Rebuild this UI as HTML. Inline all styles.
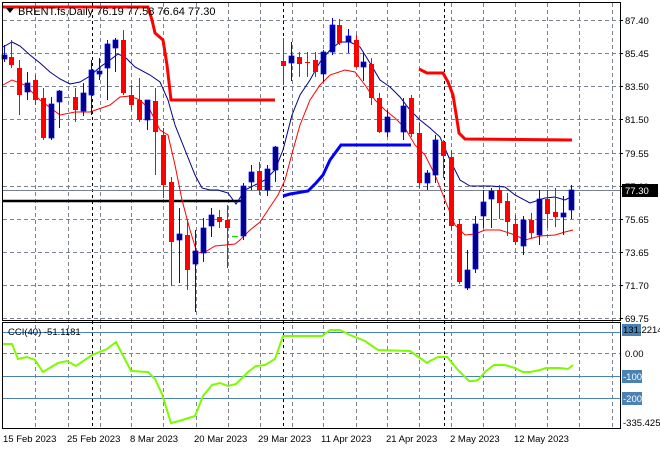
<!DOCTYPE html><html><head><style>
body{margin:0;background:#fff;width:660px;height:450px;overflow:hidden;font-family:"Liberation Sans",sans-serif}
text{font-family:"Liberation Sans",sans-serif;font-size:11px}
.sm{font-size:9.5px}
.ax{font-size:9.5px}
</style></head><body>
<svg id="s" width="660" height="450" xmlns="http://www.w3.org/2000/svg">
<rect width="660" height="450" fill="#fff"/>
<g id="grid" stroke="#7a8290" stroke-dasharray="4,3" stroke-width="1"></g>
<g stroke="#000" stroke-dasharray="3,3" stroke-width="1">
<line x1="92.5" y1="3" x2="92.5" y2="428"/><line x1="283.5" y1="3" x2="283.5" y2="428"/><line x1="444.5" y1="3" x2="444.5" y2="428"/>
</g>
<line x1="3" y1="190.5" x2="620" y2="190.5" stroke="#7a8290"/>
<line x1="3" y1="201" x2="243" y2="201" stroke="#000" stroke-width="2.5"/>
<g stroke="#4a82b4" stroke-width="1">
<line x1="3" y1="332.5" x2="620" y2="332.5"/><line x1="3" y1="376.5" x2="620" y2="376.5"/><line x1="3" y1="398.5" x2="620" y2="398.5"/>
</g>
<polyline fill="none" stroke="#ff0000" stroke-width="3" points="3,7 148,7 152,20 155,33 163,40 167,65 171,100 275,100"/>
<polyline fill="none" stroke="#ff0000" stroke-width="3" points="419,69 427,73 443,73 448,82 453,95 457,120 459,133 465,139 572,140"/>
<polyline fill="none" stroke="#0000ff" stroke-width="3" points="283,196 290,194 308,191 316,183 323,175 330,160 341,145 411,145"/>
<polyline fill="none" stroke="#00008b" stroke-width="1" points="3,47 12,42 20,46 30,55 40,63 50,72 60,79 70,84 80,82 90,76 100,67 110,60 118,54 125,57 135,67 150,75 160,82 168,100 175,125 185,150 195,175 202,188 210,190 218,190 228,193 236,204 245,190 255,185 265,180 275,170 283,150 292,115 300,95 310,80 320,62 330,50 340,42 350,42 360,47 370,63 380,80 390,87 400,97 410,110 420,120 430,128 440,137 450,160 460,180 470,186 490,186 505,187 515,195 530,203 545,198 555,197 565,200 573,196"/>
<polyline fill="none" stroke="#ff0000" stroke-width="1" points="3,85 12,80 25,85 40,100 60,115 75,112 90,112 110,105 120,97 130,96 140,100 150,110 160,130 168,135 175,165 182,200 190,230 197,253 205,252 215,246 225,245 235,244 240,240 250,230 260,222 268,210 278,195 285,180 293,150 300,125 310,100 320,85 330,75 345,70 355,72 365,85 375,100 385,110 395,118 405,128 415,145 425,155 435,175 445,200 455,225 465,235 475,234 485,230 500,230 515,235 525,240 540,236 555,235 565,232 573,230"/>
<g id="c"></g>
<polyline fill="none" stroke="#7cfc00" stroke-width="2" points="3,344 12,344 18,359 27,357 35,360 43,372 58,363 67,361 76,366 92,355 107,349 116,342 131,371 148,372 155,379 162,394 171,423 179,421 195,416 203,396 212,385 220,383 228,386 236,384 248,372 256,366 265,365 275,359 283,336 300,336 322,336 330,330 340,330 350,335 365,341 378,350 410,351 420,358 427,363 430,361 438,357 447,357 458,370 469,381 474,381 478,380 485,372 494,365 505,365 515,368 523,372 530,372 540,370 546,368 560,368 568,369 573,365"/>
<g fill="none" stroke="#000" stroke-width="1">
<rect x="2.5" y="2.5" width="618" height="318"/>
<rect x="2.5" y="322.5" width="618" height="106"/>
</g>
<path d="M6 8 L14 8 L10 13 Z" fill="#000"/>
<text x="18" y="15" fill="#000">BRENT.fs,Daily  76.19 77.58 76.64 77.30</text>
<text x="8" y="335" fill="#000" class="sm">CCI(40) -51.1181</text>
<g id="lab" fill="#000"></g>
<rect x="622" y="184" width="36" height="13" fill="#000"/>
<text x="625" y="194" fill="#fff" class="ax">77.30</text>
<rect x="622" y="324" width="19" height="12" fill="#4a82b4"/>
<text x="623" y="333" fill="#000" class="ax">131.2214</text>
<text x="625" y="357" class="ax">0.00</text>
<rect x="622" y="370" width="20" height="13" fill="#4a82b4"/><text x="623" y="380" fill="#fff" class="ax">-100</text>
<rect x="622" y="392" width="20" height="13" fill="#4a82b4"/><text x="623" y="402" fill="#fff" class="ax">-200</text>
<text x="623" y="426" class="ax">-335.425</text>
<g fill="#000" class="ax">
<text x="3" y="442" class="ax">15 Feb 2023</text><text x="67" y="442" class="ax">25 Feb 2023</text><text x="130" y="442" class="ax">8 Mar 2023</text><text x="194" y="442" class="ax">20 Mar 2023</text><text x="258" y="442" class="ax">29 Mar 2023</text><text x="321" y="442" class="ax">11 Apr 2023</text><text x="386" y="442" class="ax">21 Apr 2023</text><text x="450" y="442" class="ax">2 May 2023</text><text x="514" y="442" class="ax">12 May 2023</text>
</g>
</svg>
<script>
var ns="http://www.w3.org/2000/svg";
function el(p,t,a){var e=document.createElementNS(ns,t);for(var k in a)e.setAttribute(k,a[k]);p.appendChild(e);return e;}
var g=document.getElementById('grid');
[35,68,100,131,163,196,228,260,292,323,356,387,419,451,483,515,547,579,612].forEach(function(x){el(g,'line',{x1:x+.5,y1:3,x2:x+.5,y2:428});});
[20,53,86,119,153,186,219,252,285,318,353].forEach(function(y){el(g,'line',{x1:3,y1:y+.5,x2:620,y2:y+.5});});
var L=document.getElementById('lab');
[["87.40",20],["85.45",53],["83.50",86],["81.50",119],["79.55",153],["77.60",186],["75.65",219],["73.65",252],["71.70",285],["69.75",318]].forEach(function(a){var t=el(L,'text',{x:625,y:a[1]+4,'class':'ax'});t.textContent=a[0];el(L,'line',{x1:620,y1:a[1]+.5,x2:623,y2:a[1]+.5,stroke:'#000'});});
var C=[[4,55,59,45,62,'b'],[11,57,65,40,68,'r'],[19,68,95,60,115,'r'],[27,83,92,72,100,'b'],[35,80,100,75,105,'r'],[43,98,138,88,140,'r'],[51,104,138,97,140,'b'],[59,91,102,90,128,'b'],[67,97,97,97,97,'g'],[75,97,110,88,122,'r'],[83,93,111,83,116,'b'],[91,70,95,60,115,'b'],[99,71,74,58,80,'b'],[107,44,68,40,100,'b'],[115,40,48,38,72,'b'],[123,40,93,30,95,'r'],[131,95,105,85,110,'r'],[139,100,120,78,122,'r'],[147,100,120,100,130,'b'],[155,101,132,88,175,'r'],[163,135,185,128,198,'r'],[171,182,242,177,286,'r'],[179,234,240,208,283,'b'],[187,235,270,220,290,'r'],[195,251,264,230,312,'b'],[203,228,253,218,262,'b'],[211,215,226,208,237,'b'],[219,217,222,210,228,'r'],[227,220,228,205,268,'r'],[235,236,236,236,236,'g'],[243,186,236,183,240,'b'],[251,172,182,165,190,'b'],[259,171,190,162,195,'r'],[267,169,190,165,196,'b'],[275,147,170,146,182,'b'],[283,61,66,38,85,'r'],[291,56,63,42,81,'b'],[299,57,64,52,77,'r'],[307,62,63,52,77,'r'],[315,60,72,52,77,'r'],[323,52,74,50,82,'b'],[332,25,52,18,55,'b'],[339,25,43,19,45,'r'],[348,36,42,29,53,'b'],[356,40,67,35,68,'r'],[363,62,67,53,81,'b'],[371,64,98,58,105,'r'],[379,98,132,93,133,'r'],[387,117,132,110,137,'b'],[395,119,120,119,120,'g'],[403,106,132,98,140,'b'],[411,98,134,95,137,'r'],[419,133,183,123,188,'r'],[427,173,183,170,190,'b'],[435,140,175,135,183,'b'],[443,142,156,140,178,'r'],[451,157,226,150,230,'r'],[459,224,282,219,284,'r'],[467,270,288,250,290,'b'],[475,224,269,216,273,'b'],[483,202,216,190,228,'b'],[491,191,199,188,228,'b'],[499,190,203,185,219,'r'],[507,201,222,193,236,'r'],[515,224,242,215,245,'r'],[523,220,246,216,255,'b'],[531,220,233,213,238,'r'],[539,199,235,190,245,'b'],[547,199,214,190,228,'r'],[555,212,217,188,227,'r'],[563,213,217,196,235,'b'],[571,190,210,185,219,'b']];
var cg=document.getElementById('c');
C.forEach(function(c){var x=c[0];
 if(c[5]=='g'){el(cg,'line',{x1:x-3,y1:c[1]+.5,x2:x+3,y2:c[1]+.5,stroke:'#00dd00'});return;}
 var col=c[5]=='r'?'#ff0000':'#0000ff', fill=c[5]=='r'?'#ff0000':'#00008b';
 el(cg,'line',{x1:x+.5,y1:c[3],x2:x+.5,y2:c[4],stroke:col});
 el(cg,'rect',{x:x-2,y:c[1],width:5,height:Math.max(1,c[2]-c[1]),fill:fill,stroke:c[5]=='r'?'none':'#0000ff','stroke-width':0.7});
});
</script>
</body></html>
